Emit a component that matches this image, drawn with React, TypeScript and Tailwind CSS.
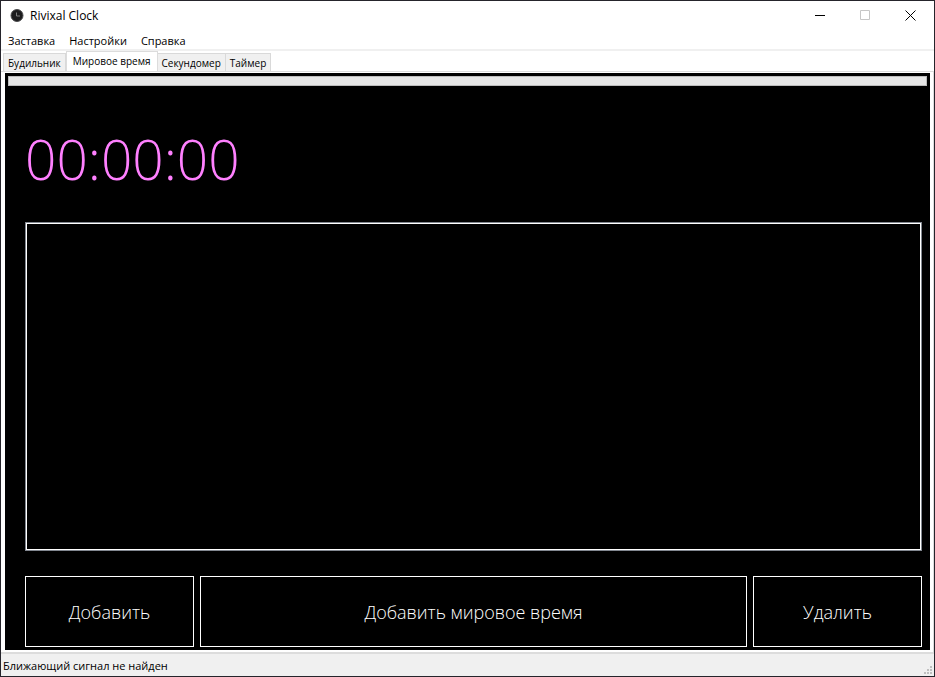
import { useState } from "react";

const menus = ["Заставка", "Настройки", "Справка"];
const tabs = ["Будильник", "Мировое время", "Секундомер", "Таймер"];

function ClockIcon() {
  return (
    <svg className="size-4" viewBox="0 0 16 16" aria-hidden="true">
      <circle cx="8" cy="7.5" r="6" fill="#1c1c1e" stroke="#4c4c4e" />
      <path d="M7.5 4.5v3.5h3.5" fill="none" stroke="#8a8a8a" strokeWidth="0.9" />
    </svg>
  );
}

function TitleBar() {
  return (
    <header className="flex h-[30px] shrink-0 items-center bg-white pl-2">
      <ClockIcon />
      <h1 className="ml-[5px] flex-1 text-[12px] leading-4">Rivixal Clock</h1>
      <button aria-label="Свернуть" className="flex h-7 w-[45px] items-center justify-center self-start">
        <svg className="size-[11px]" viewBox="0 0 11 11"><path d="M1 5.5h10" stroke="#000" /></svg>
      </button>
      <button aria-label="Развернуть" disabled className="flex h-7 w-[45px] items-center justify-center self-start">
        <svg className="size-[11px]" viewBox="0 0 11 11"><path d="M1.5.5h9v9h-9z" fill="none" stroke="#c6c6c6" /></svg>
      </button>
      <button aria-label="Закрыть" className="flex h-7 w-[47px] items-center justify-center self-start">
        <svg className="size-[11px]" viewBox="0 0 11 11"><path d="M.5.5l10 10M10.5.5l-10 10" stroke="#000" /></svg>
      </button>
    </header>
  );
}

function ResizeGrip() {
  return (
    <svg className="size-[10px] self-end" viewBox="0 0 10 10" fill="#bfbfbf" aria-hidden="true">
      <path d="M7 0h2v2H7zM7 3h2v2H7zM7 6h2v2H7zM4 3h2v2H4zM4 6h2v2H4zM1 6h2v2H1z" />
    </svg>
  );
}

export default function App() {
  const [active, setActive] = useState(1);
  const action = "h-[71px] border border-white pt-0.5 text-[18px] font-light text-white";
  return (
    <div className="flex h-screen flex-col border border-[#25242b] bg-white font-['Open_Sans','Noto_Sans',sans-serif] text-black">
      <TitleBar />
      <nav className="flex h-5 shrink-0 border-b-2 border-[#f0f0f0] text-[11px] leading-[18px]">
        {menus.map((menu) => (
          <button key={menu} className="px-[7px] pt-px">{menu}</button>
        ))}
      </nav>
      <div role="tablist" className="flex h-[21px] shrink-0 items-end border-b border-[#dcdcdc] pl-0.5 text-[10px]">
        {tabs.map((tab, i) => (
          <button
            key={tab}
            role="tab"
            aria-selected={i === active}
            onClick={() => setActive(i)}
            className={
              i === active
                ? "h-5 border-x border-t border-[#dcdcdc] bg-white px-1.5"
                : "h-[18px] border-r border-t border-[#d9d9d9] bg-[#f0f0f0] px-1 pt-0.5 first:border-l"
            }
          >
            {tab}
          </button>
        ))}
      </div>
      <main className="flex min-h-0 flex-1 flex-col border-r border-[#dcdcdc] px-[3px] pb-0.5 pl-1 pt-px">
        <section className="flex min-h-0 flex-1 flex-col bg-black p-[3px]">
          <div role="progressbar" aria-label="Секунды" aria-valuenow={0} className="h-[10px] shrink-0 border border-[#bcbcbc] bg-[#e6e6e6]" />
          <div className="flex min-h-0 flex-1 flex-col pl-[17px] pr-[5px]">
            <time className="mt-[43px] h-[60px] shrink-0 text-[55px] leading-[60px] font-light text-[#ff80ff]">00:00:00</time>
            <ul aria-label="Мировое время" className="mt-[33px] min-h-0 flex-1 border border-[#828790] inset-ring inset-ring-white" />
            <div className="mt-[25px] grid shrink-0 grid-cols-[169px_1fr_169px] gap-1.5">
              <button className={action}>Добавить</button>
              <button className={action}>Добавить мировое время</button>
              <button className={action}>Удалить</button>
            </div>
          </div>
        </section>
      </main>
      <footer className="flex h-6 shrink-0 items-center border-t-2 border-[#dcdcdc] bg-[#f0f0f0] pl-0.5 pr-px text-[11px]">
        <p className="flex-1 pt-0.5">Ближающий сигнал не найден</p>
        <ResizeGrip />
      </footer>
    </div>
  );
}
